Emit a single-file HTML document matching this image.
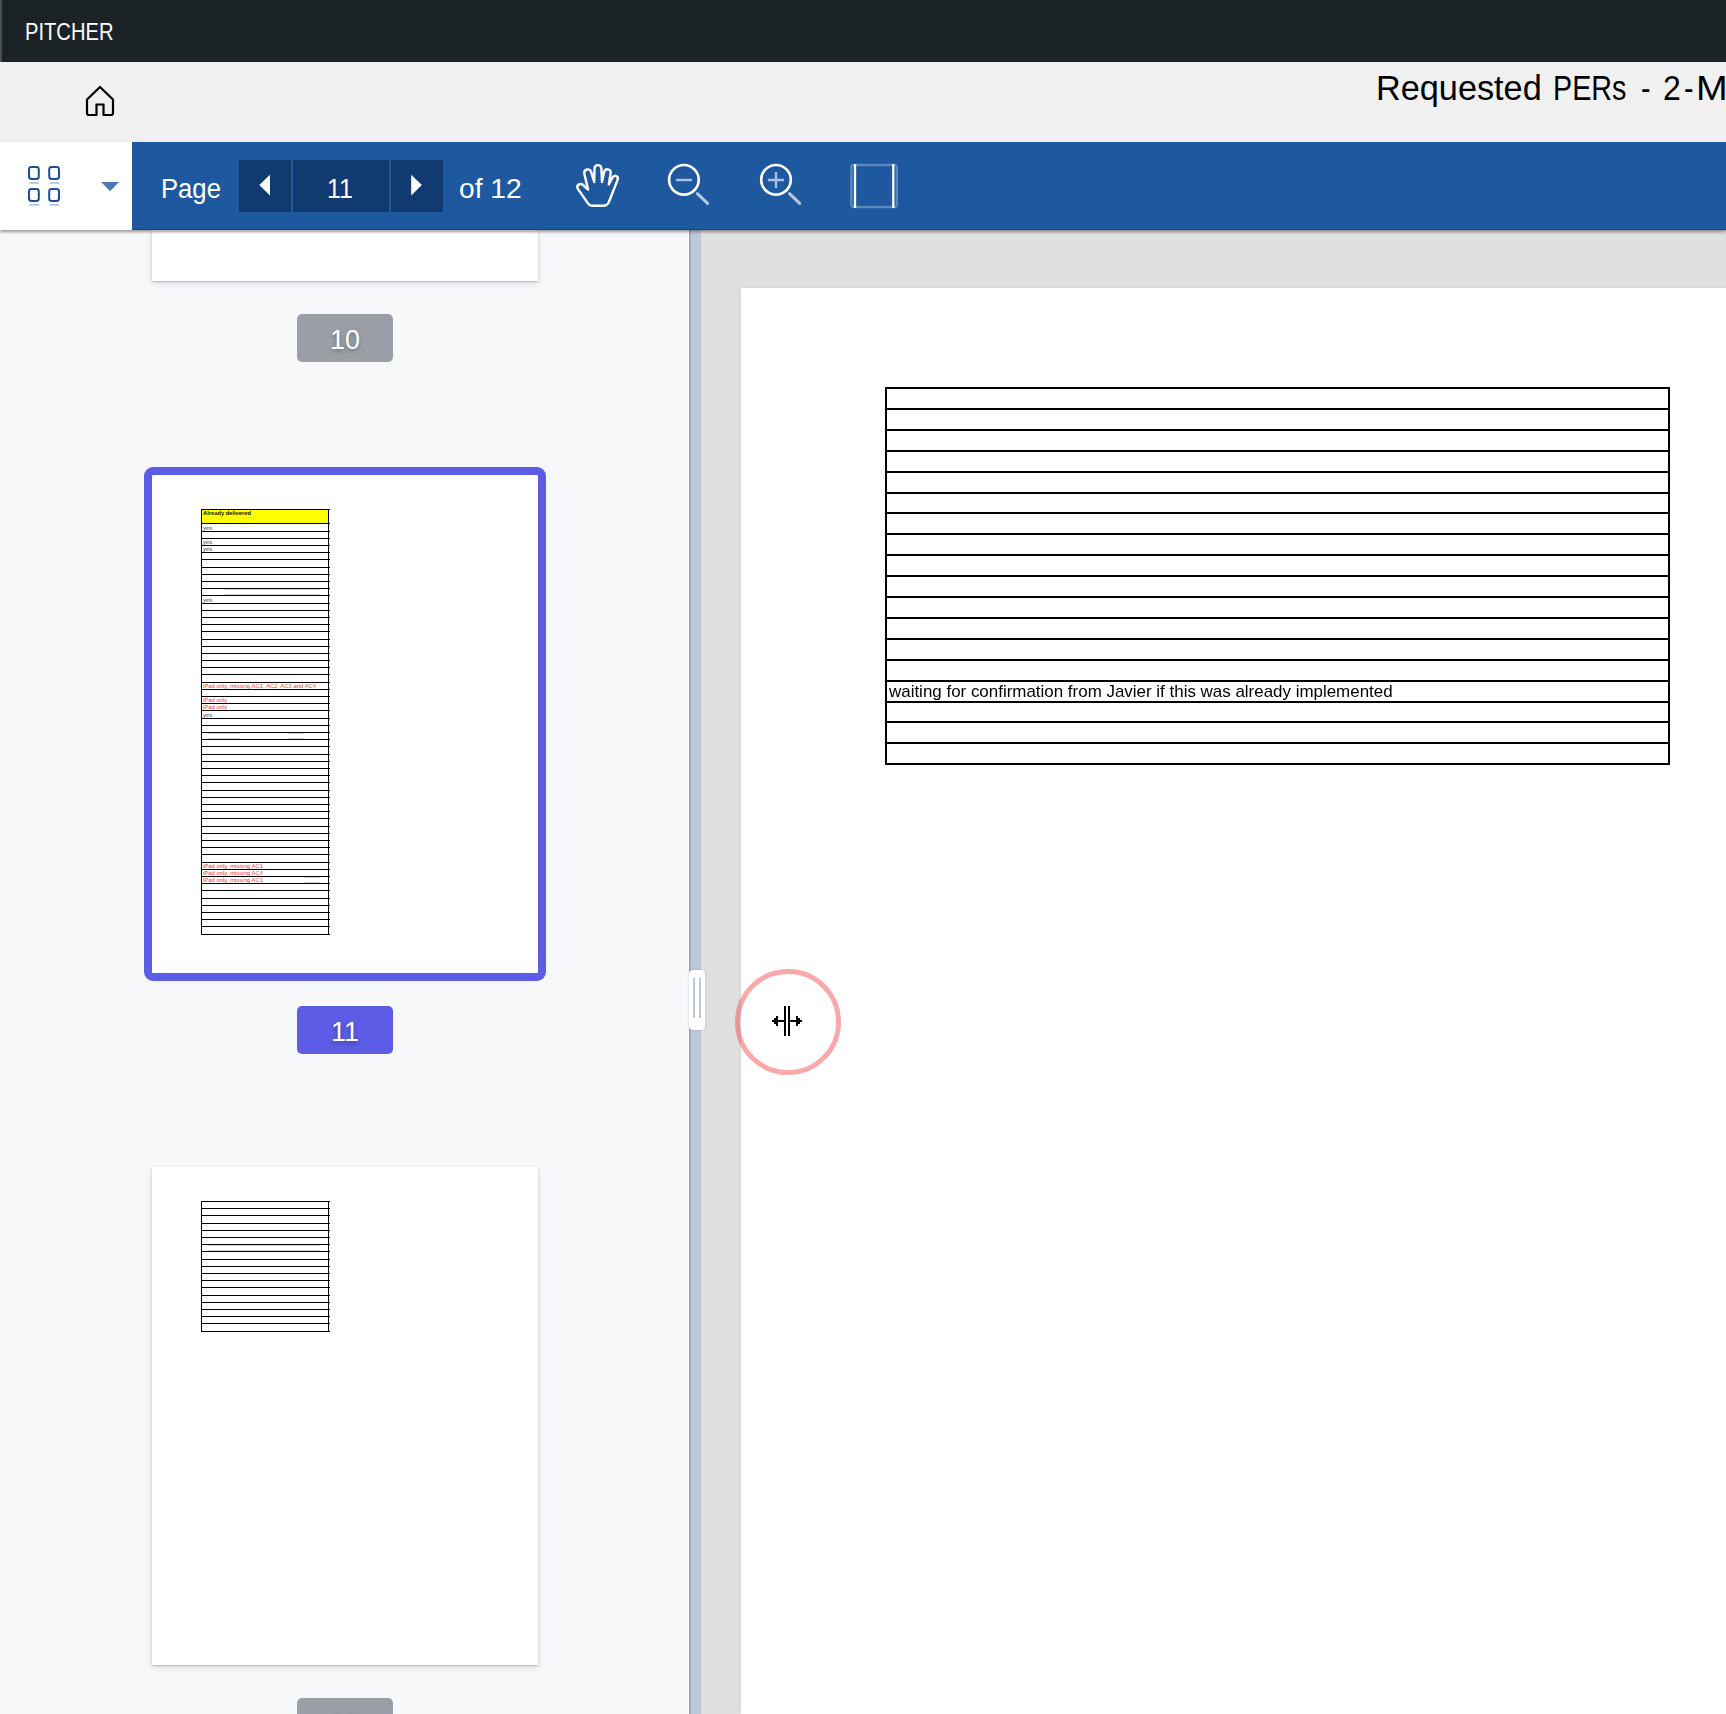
<!DOCTYPE html>
<html lang="en">
<head>
<meta charset="utf-8">
<title>PITCHER</title>
<style>
html,body{margin:0;padding:0;}
body{width:1726px;height:1714px;overflow:hidden;position:relative;background:#f7f8fa;font-family:"Liberation Sans", sans-serif;}
.abs{position:absolute;}
#topbar{left:0;top:0;width:1726px;height:62px;background:#1c2326;}
#topbar .edge{left:0;top:0;width:2px;height:62px;background:#4b5053;}
#brand{left:25px;top:17.9px;color:#fff;font-size:24px;line-height:28px;white-space:nowrap;transform-origin:0 50%;transform:scaleX(.84);}
#bar2{left:0;top:62px;width:1726px;height:80px;background:#f0f0f0;}
.tw{top:66px;font-size:35.5px;line-height:44px;color:#000;white-space:nowrap;transform-origin:0 50%;}
#toolbar{left:0;top:142px;width:1726px;height:88px;background:#1e59a0;box-shadow:0 2px 3px rgba(0,0,0,.38), inset 0 -1px 0 rgba(10,20,50,.3);}
#viewbtn{left:0;top:142px;width:132px;height:88px;background:#fff;}
.tbtxt{color:#fff;font-size:27px;line-height:32px;white-space:nowrap;transform-origin:0 50%;}
.nbtn{top:160px;height:52px;background:#103a70;}
#sidebar{left:0;top:229px;width:689px;height:1485px;background:#f7f8fa;}
#split{left:688px;top:229px;width:14px;height:1485px;background:linear-gradient(90deg,#fdfdfe 0,#fdfdfe 1px,#9ba1ab 1px,#9ba1ab 2px,#a6aebc 2px,#a6aebc 3px,#bdc8db 3px,#bdc8db 13px,#dbdfe7 13px,#dbdfe7 14px);}
#split i{display:none;}
#mainbg{left:701px;top:229px;width:1025px;height:1485px;background:#e0e0e0;}
#page{left:741px;top:288px;width:985px;height:1426px;background:#fff;box-shadow:0 0 6px rgba(0,0,0,.05);}
.thumb{left:152px;width:386px;height:498px;background:#fff;box-shadow:0 1px 2px rgba(60,70,80,.32),0 3px 8px rgba(60,70,80,.10);}
.tsvg,.msvg{position:absolute;left:0;top:0;display:block;}
.tsvg text{font-family:"Liberation Sans", sans-serif;}
.badge{left:297px;width:96px;height:48px;border-radius:5px;color:#fff;font-size:27px;line-height:52.6px;text-align:center;text-shadow:0 2px 4px rgba(0,0,0,.3);}
.bg-gray{background:#9a9ea6;}
.bg-sel{background:#5c5ce6;}
#selring{left:144px;top:467px;width:386px;height:498px;border:8px solid #5c5ce6;border-radius:9px;}
#handle{left:689px;top:970px;width:16px;height:60px;background:#fff;border-radius:4px;box-shadow:0 0 2px rgba(0,0,0,.25);}
#handle i{position:absolute;top:8px;width:1.7px;height:40px;background:#bcc7dc;}
#cell{will-change:transform;left:889.2px;top:681.6px;font-size:16.95px;line-height:19px;color:#000;white-space:nowrap;transform-origin:0 50%;}
#ring{left:735.3px;top:969px;width:95.5px;height:95.5px;border:5px solid rgba(244,64,68,.45);border-radius:50%;}
</style>
</head>
<body>
<div id="topbar" class="abs"><div class="edge abs"></div></div>
<div id="brand" class="abs">PITCHER</div>
<div id="bar2" class="abs"></div>
<svg class="abs" style="left:84px;top:84px" width="32" height="34" viewBox="0 0 32 34" fill="none" stroke="#000" stroke-width="2.2" stroke-linejoin="round" stroke-linecap="round">
<path d="M16 3 L29 15.5 V29 a2 2 0 0 1 -2 2 H19.5 V20.5 H12.5 V31 H5 a2 2 0 0 1 -2 -2 V15.5 Z"/>
</svg>
<div class="tw abs" style="left:1376px;transform:scaleX(.965)">Requested</div>
<div class="tw abs" style="left:1553px;transform:scaleX(.81)">PERs</div>
<div class="tw abs" style="left:1641px;transform:scaleX(.8)">-</div>
<div class="tw abs" style="left:1663px;transform:scaleX(.9)">2</div>
<div class="tw abs" style="left:1684px;transform:scaleX(.8)">-</div>
<div class="tw abs" style="left:1695.6px;transform:scaleX(1.07)">Mar-2020</div>

<div id="sidebar" class="abs"></div>
<div class="thumb abs" style="top:229px;height:52px"></div>
<div class="badge bg-gray abs" style="top:314px">10</div>
<div class="thumb abs" style="top:475px">
<svg class="tsvg" width="386" height="498" viewBox="0 0 386 498" shape-rendering="crispEdges">
<rect x="50" y="35" width="126" height="13" fill="#ffff00"/>
<rect x="72" y="114" width="96" height="1" fill="#d6d8d7"/>
<rect x="72" y="119" width="96" height="1" fill="#d6d8d7"/>
<rect x="56" y="258" width="32" height="1" fill="#d6d8d7"/>
<rect x="56" y="263" width="32" height="1" fill="#d6d8d7"/>
<rect x="136" y="258" width="16" height="1" fill="#d6d8d7"/>
<rect x="136" y="263" width="16" height="1" fill="#d6d8d7"/>
<rect x="152" y="402" width="16" height="1" fill="#d6d8d7"/>
<rect x="152" y="407" width="16" height="1" fill="#d6d8d7"/>
<rect x="49" y="34" width="129" height="1" fill="#000"/>
<rect x="49" y="48" width="129" height="1" fill="#000"/>
<rect x="49" y="56" width="129" height="1" fill="#000"/>
<rect x="49" y="63" width="129" height="1" fill="#000"/>
<rect x="49" y="70" width="129" height="1" fill="#000"/>
<rect x="49" y="77" width="129" height="1" fill="#000"/>
<rect x="49" y="84" width="129" height="1" fill="#000"/>
<rect x="49" y="92" width="129" height="1" fill="#000"/>
<rect x="49" y="99" width="129" height="1" fill="#000"/>
<rect x="49" y="106" width="129" height="1" fill="#000"/>
<rect x="49" y="113" width="129" height="1" fill="#000"/>
<rect x="49" y="120" width="129" height="1" fill="#000"/>
<rect x="49" y="128" width="129" height="1" fill="#000"/>
<rect x="49" y="135" width="129" height="1" fill="#000"/>
<rect x="49" y="142" width="129" height="1" fill="#000"/>
<rect x="49" y="149" width="129" height="1" fill="#000"/>
<rect x="49" y="156" width="129" height="1" fill="#000"/>
<rect x="49" y="164" width="129" height="1" fill="#000"/>
<rect x="49" y="171" width="129" height="1" fill="#000"/>
<rect x="49" y="178" width="129" height="1" fill="#000"/>
<rect x="49" y="185" width="129" height="1" fill="#000"/>
<rect x="49" y="192" width="129" height="1" fill="#000"/>
<rect x="49" y="199" width="129" height="1" fill="#000"/>
<rect x="49" y="207" width="129" height="1" fill="#000"/>
<rect x="49" y="214" width="129" height="1" fill="#000"/>
<rect x="49" y="221" width="129" height="1" fill="#000"/>
<rect x="49" y="228" width="129" height="1" fill="#000"/>
<rect x="49" y="235" width="129" height="1" fill="#000"/>
<rect x="49" y="243" width="129" height="1" fill="#000"/>
<rect x="49" y="250" width="129" height="1" fill="#000"/>
<rect x="49" y="257" width="129" height="1" fill="#000"/>
<rect x="49" y="264" width="129" height="1" fill="#000"/>
<rect x="49" y="271" width="129" height="1" fill="#000"/>
<rect x="49" y="279" width="129" height="1" fill="#000"/>
<rect x="49" y="286" width="129" height="1" fill="#000"/>
<rect x="49" y="293" width="129" height="1" fill="#000"/>
<rect x="49" y="300" width="129" height="1" fill="#000"/>
<rect x="49" y="307" width="129" height="1" fill="#000"/>
<rect x="49" y="315" width="129" height="1" fill="#000"/>
<rect x="49" y="322" width="129" height="1" fill="#000"/>
<rect x="49" y="329" width="129" height="1" fill="#000"/>
<rect x="49" y="336" width="129" height="1" fill="#000"/>
<rect x="49" y="343" width="129" height="1" fill="#000"/>
<rect x="49" y="351" width="129" height="1" fill="#000"/>
<rect x="49" y="358" width="129" height="1" fill="#000"/>
<rect x="49" y="365" width="129" height="1" fill="#000"/>
<rect x="49" y="372" width="129" height="1" fill="#000"/>
<rect x="49" y="379" width="129" height="1" fill="#000"/>
<rect x="49" y="387" width="129" height="1" fill="#000"/>
<rect x="49" y="394" width="129" height="1" fill="#000"/>
<rect x="49" y="401" width="129" height="1" fill="#000"/>
<rect x="49" y="408" width="129" height="1" fill="#000"/>
<rect x="49" y="415" width="129" height="1" fill="#000"/>
<rect x="49" y="423" width="129" height="1" fill="#000"/>
<rect x="49" y="430" width="129" height="1" fill="#000"/>
<rect x="49" y="437" width="129" height="1" fill="#000"/>
<rect x="49" y="444" width="129" height="1" fill="#000"/>
<rect x="49" y="451" width="129" height="1" fill="#000"/>
<rect x="49" y="459" width="129" height="1" fill="#000"/>
<rect x="49" y="34" width="1" height="426" fill="#000"/>
<rect x="176" y="34" width="1" height="426" fill="#000"/>
<text x="51" y="39.60000000000002" fill="#1a1a00" font-weight="bold" font-size="5.75" text-rendering="geometricPrecision">Already delivered</text>
<text x="51" y="55.0" fill="#444" font-weight="normal" font-size="5.92" text-rendering="geometricPrecision">yes</text>
<text x="51" y="69.0" fill="#444" font-weight="normal" font-size="5.92" text-rendering="geometricPrecision">yes</text>
<text x="51" y="76.0" fill="#444" font-weight="normal" font-size="5.92" text-rendering="geometricPrecision">yes</text>
<text x="51" y="127.0" fill="#444" font-weight="normal" font-size="5.92" text-rendering="geometricPrecision">yes</text>
<text x="51" y="212.60000000000002" fill="#ee3a3a" font-weight="normal" font-size="5.92" text-rendering="geometricPrecision">iPad only, missing AC1, AC2, AC3 and AC4</text>
<text x="51" y="226.60000000000002" fill="#ee3a3a" font-weight="normal" font-size="5.92" text-rendering="geometricPrecision">iPad only</text>
<text x="51" y="234.0" fill="#ee3a3a" font-weight="normal" font-size="5.92" text-rendering="geometricPrecision">iPad only</text>
<text x="51" y="242.0" fill="#444" font-weight="normal" font-size="5.92" text-rendering="geometricPrecision">yes</text>
<text x="51" y="392.6" fill="#ee3a3a" font-weight="normal" font-size="5.92" text-rendering="geometricPrecision">iPad only, missing AC1</text>
<text x="51" y="399.6" fill="#ee3a3a" font-weight="normal" font-size="5.92" text-rendering="geometricPrecision">iPad only, missing AC4</text>
<text x="51" y="406.6" fill="#ee3a3a" font-weight="normal" font-size="5.92" text-rendering="geometricPrecision">iPad only, missing AC1</text>
</svg>
</div>
<div id="selring" class="abs"></div>
<div class="badge bg-sel abs" style="top:1006px">11</div>
<div class="thumb abs" style="top:1167px">
<svg class="tsvg" width="386" height="498" viewBox="0 0 386 498" shape-rendering="crispEdges">
<rect x="56" y="78" width="112" height="1" fill="#d6d8d7"/>
<rect x="56" y="83" width="112" height="1" fill="#d6d8d7"/>
<rect x="49" y="34" width="129" height="1" fill="#000"/>
<rect x="49" y="41" width="129" height="1" fill="#000"/>
<rect x="49" y="48" width="129" height="1" fill="#000"/>
<rect x="49" y="56" width="129" height="1" fill="#000"/>
<rect x="49" y="63" width="129" height="1" fill="#000"/>
<rect x="49" y="70" width="129" height="1" fill="#000"/>
<rect x="49" y="77" width="129" height="1" fill="#000"/>
<rect x="49" y="84" width="129" height="1" fill="#000"/>
<rect x="49" y="92" width="129" height="1" fill="#000"/>
<rect x="49" y="99" width="129" height="1" fill="#000"/>
<rect x="49" y="106" width="129" height="1" fill="#000"/>
<rect x="49" y="113" width="129" height="1" fill="#000"/>
<rect x="49" y="120" width="129" height="1" fill="#000"/>
<rect x="49" y="128" width="129" height="1" fill="#000"/>
<rect x="49" y="135" width="129" height="1" fill="#000"/>
<rect x="49" y="142" width="129" height="1" fill="#000"/>
<rect x="49" y="149" width="129" height="1" fill="#000"/>
<rect x="49" y="156" width="129" height="1" fill="#000"/>
<rect x="49" y="164" width="129" height="1" fill="#000"/>
<rect x="49" y="34" width="1" height="131" fill="#000"/>
<rect x="176" y="34" width="1" height="131" fill="#000"/>
</svg>
</div>
<div class="badge bg-gray abs" style="top:1698px">12</div>

<div id="mainbg" class="abs"></div>
<div id="page" class="abs">
<svg class="msvg" width="986" height="1426" viewBox="0 0 986 1426" shape-rendering="crispEdges">
<rect x="144" y="99" width="785" height="2" fill="#000"/>
<rect x="144" y="120" width="785" height="2" fill="#000"/>
<rect x="144" y="141" width="785" height="2" fill="#000"/>
<rect x="144" y="162" width="785" height="2" fill="#000"/>
<rect x="144" y="183" width="785" height="2" fill="#000"/>
<rect x="144" y="204" width="785" height="2" fill="#000"/>
<rect x="144" y="224" width="785" height="2" fill="#000"/>
<rect x="144" y="245" width="785" height="2" fill="#000"/>
<rect x="144" y="266" width="785" height="2" fill="#000"/>
<rect x="144" y="287" width="785" height="2" fill="#000"/>
<rect x="144" y="308" width="785" height="2" fill="#000"/>
<rect x="144" y="329" width="785" height="2" fill="#000"/>
<rect x="144" y="350" width="785" height="2" fill="#000"/>
<rect x="144" y="371" width="785" height="2" fill="#000"/>
<rect x="144" y="392" width="785" height="2" fill="#000"/>
<rect x="144" y="413" width="785" height="2" fill="#000"/>
<rect x="144" y="433" width="785" height="2" fill="#000"/>
<rect x="144" y="454" width="785" height="2" fill="#000"/>
<rect x="144" y="475" width="785" height="2" fill="#000"/>
<rect x="144" y="99" width="2" height="378" fill="#000"/>
<rect x="927" y="99" width="2" height="378" fill="#000"/>
</svg>
</div>
<div id="cell" class="abs">waiting for confirmation from Javier if this was already implemented</div>
<div id="split" class="abs"><i></i></div>
<div id="handle" class="abs"><i style="left:4.1px"></i><i style="left:10.3px"></i></div>

<div id="toolbar" class="abs"></div>
<div id="viewbtn" class="abs"></div>
<svg class="abs" style="left:24px;top:162px" width="100" height="48" viewBox="0 0 100 48" fill="none">
<g stroke="#1c4e96" stroke-width="2">
<rect x="5" y="5" width="9.8" height="11.9" rx="2.4"/>
<rect x="25.2" y="5" width="9.8" height="11.9" rx="2.4"/>
<rect x="5" y="27" width="9.8" height="11.9" rx="2.4"/>
<rect x="25.2" y="27" width="9.8" height="11.9" rx="2.4"/>
</g>
<g fill="#b3c6e2"><rect x="5.3" y="20.1" width="9.6" height="1.8"/><rect x="25.5" y="20.1" width="9.6" height="1.8"/><rect x="5.3" y="42" width="9.6" height="1.8"/><rect x="25.5" y="42" width="9.6" height="1.8"/></g>
<path d="M77.2 20 H95 L86.1 29.2 Z" fill="#4a78b8"/>
</svg>
<div class="tbtxt abs" id="lblpage" style="left:161.4px;top:172.7px;transform:scaleX(.95)">Page</div>
<div class="nbtn abs" style="left:239px;width:52px"></div>
<div class="nbtn abs" style="left:293px;width:96px"></div>
<div class="nbtn abs" style="left:391px;width:52px"></div>
<svg class="abs" style="left:239px;top:160px" width="204" height="52" viewBox="0 0 204 52"><path d="M31 14.8 V35.4 L20.3 25.1 Z" fill="#fff"/><path d="M172.2 14.8 V35.4 L182.9 25.1 Z" fill="#fff"/></svg>
<div class="tbtxt abs" id="lblnum" style="left:292px;top:172.7px;width:96px;text-align:center;transform-origin:50% 50%;transform:scaleX(.92)">11</div>
<div class="tbtxt abs" id="lblof" style="left:458.6px;top:172.7px;transform:scaleX(1.045)">of 12</div>

<svg class="abs" style="left:570px;top:158px" width="340" height="56" viewBox="570 158 340 56" fill="none" stroke="#fff" stroke-width="2.5" stroke-linecap="round" stroke-linejoin="round">
<!-- hand -->
<path d="M588.1 189.6 L584.4 174 C583.4 169.3 590 167.3 591.2 172.2 L594.2 182 L594.5 169 C594.6 163.8 601.2 163.8 601.4 169 L602 182 L604.1 172.3 C605.2 167.4 611.7 168.8 610.6 173.6 L608.8 184.4 L612.4 177.8 C614.5 173.9 619.3 176.2 617.4 180.4 L609 201.8 C607.8 204.6 606.2 205.8 603.4 205.8 L592.8 205.8 C590.4 205.8 589.2 205.2 588 203.4 L578.2 189.4 C575.4 185.6 580 182.4 583 185 Z" stroke-width="2.4"/>
<!-- zoom out -->
<circle cx="683.9" cy="179.8" r="14.8" stroke-width="2.6"/>
<path d="M675.9 180 H692" stroke="#a6c0e6" stroke-linecap="butt" stroke-width="2.4"/>
<path d="M697.4 193.6 L707.6 203.4" stroke="#b5c8e4" stroke-width="3"/>
<!-- zoom in -->
<circle cx="776" cy="179.8" r="14.8" stroke-width="2.6"/>
<path d="M767.9 180 H784 M776 171.9 V188" stroke="#a6c0e6" stroke-linecap="butt" stroke-width="2.4"/>
<path d="M789.5 193.6 L799.7 203.4" stroke="#b5c8e4" stroke-width="3"/>
<!-- fit -->
<rect x="851.4" y="165" width="45.4" height="42" rx="2.5" stroke="rgba(255,255,255,.27)" stroke-width="2.4"/>
<path d="M855 164 V208 M893.3 164 V208" stroke-width="2.3" stroke-linecap="butt"/>
</svg>

<div id="ring" class="abs"></div>
<svg class="abs" style="left:770px;top:1004px" width="34" height="34" viewBox="0 0 34 34" fill="#000" shape-rendering="crispEdges">
<rect x="14" y="2" width="2" height="30"/><rect x="18" y="2" width="2" height="30"/><rect x="2" y="16" width="12" height="2"/><rect x="20" y="16" width="12" height="2"/><rect x="4" y="14" width="2" height="6"/><rect x="6" y="12" width="2" height="10"/><rect x="26" y="12" width="2" height="10"/><rect x="28" y="14" width="2" height="6"/>
</svg>
</body>
</html>
